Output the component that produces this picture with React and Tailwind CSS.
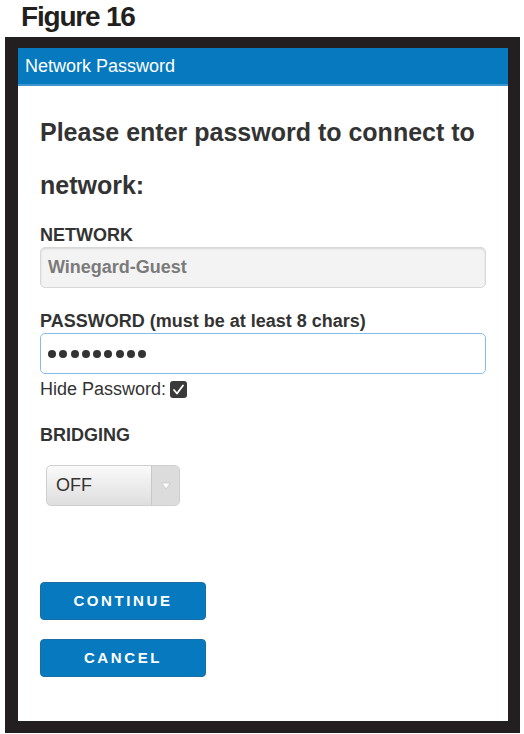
export default function App() {
  const dots = Array.from({ length: 9 });
  return (
    <div className="w-[524px] h-[734px] bg-white relative font-['Liberation_Sans',Arial,sans-serif] overflow-hidden">
      <h1 className="pl-[21px] pt-[1px] h-[37px] text-[28px] leading-[32px] font-bold tracking-[-1.2px] text-[#231f20]">
        Figure 16
      </h1>
      <div className="ml-[5px] w-[515px] h-[696px] bg-[#231f20] pl-[13px] pr-[12px] pt-[11px] pb-[12px]">
        <div className="w-full h-full bg-white flex flex-col">
          <div className="h-[38px] bg-[#0679bf] border-b-2 border-[#3d96cc] flex items-center pl-[7px] text-white text-[18px]">
            Network Password
          </div>
          <div className="px-[22px] text-[#333]">
            <h2 className="mt-[20px] text-[25px] leading-[53px] font-bold">
              Please enter password to connect to network:
            </h2>
            <div className="mt-[12px] text-[18px] font-bold leading-[22px]">NETWORK</div>
            <div className="mt-[1px] h-[41px] w-[446px] rounded-[5px] bg-[#f3f3f3] border border-[#d8d8d8] shadow-[inset_0_1px_2px_rgba(0,0,0,0.12)] flex items-center pl-[7px] text-[18px] font-bold text-[#7a7a7a]">
              Winegard-Guest
            </div>
            <div className="mt-[22px] text-[18px] font-bold leading-[22px]">
              PASSWORD (must be at least 8 chars)
            </div>
            <div className="mt-[1px] h-[41px] w-[446px] rounded-[5px] bg-white border border-[#86bde8] flex items-center gap-[3.25px] pl-[7px]">
              {dots.map((_, i) => (
                <span key={i} className="w-[8px] h-[8px] rounded-full bg-[#333]" />
              ))}
            </div>
            <div className="mt-[4px] flex items-center text-[18px] leading-[22px]">
              <span>Hide Password:</span>
              <span className="ml-[4px] w-[17px] h-[17px] rounded-[3px] bg-[#3a3a3a] flex items-center justify-center">
                <svg width="13" height="13" viewBox="0 0 13 13">
                  <path d="M2 7 L5 10.5 L11 2.5" fill="none" stroke="white" strokeWidth="1.8" strokeLinecap="round" strokeLinejoin="round" />
                </svg>
              </span>
            </div>
            <div className="mt-[24px] text-[18px] font-bold leading-[22px]">BRIDGING</div>
            <div className="mt-[19px] ml-[6px] w-[134px] h-[41px] rounded-[5px] border border-[#cfcfcf] bg-gradient-to-b from-[#fafafa] to-[#dedede] flex overflow-hidden">
              <div className="flex-1 flex items-center pl-[9px] text-[18px] text-[#333]">OFF</div>
              <div className="w-[28px] border-l border-[#c8c8c8] bg-[#dcdcdc] flex items-center justify-center">
                <svg width="10" height="8" viewBox="0 0 10 8">
                  <path d="M1 1 L9 1 L5 7 Z" fill="white" stroke="#c4c4c4" strokeWidth="0.7" />
                </svg>
              </div>
            </div>
            <button className="mt-[76px] block w-[166px] h-[38px] rounded-[4px] bg-[#0679bf] border border-[#1a6ea3] text-white text-[15px] font-bold tracking-[2.6px]">
              CONTINUE
            </button>
            <button className="mt-[19px] block w-[166px] h-[38px] rounded-[4px] bg-[#0679bf] border border-[#1a6ea3] text-white text-[15px] font-bold tracking-[2.6px]">
              CANCEL
            </button>
          </div>
        </div>
      </div>
    </div>
  );
}
